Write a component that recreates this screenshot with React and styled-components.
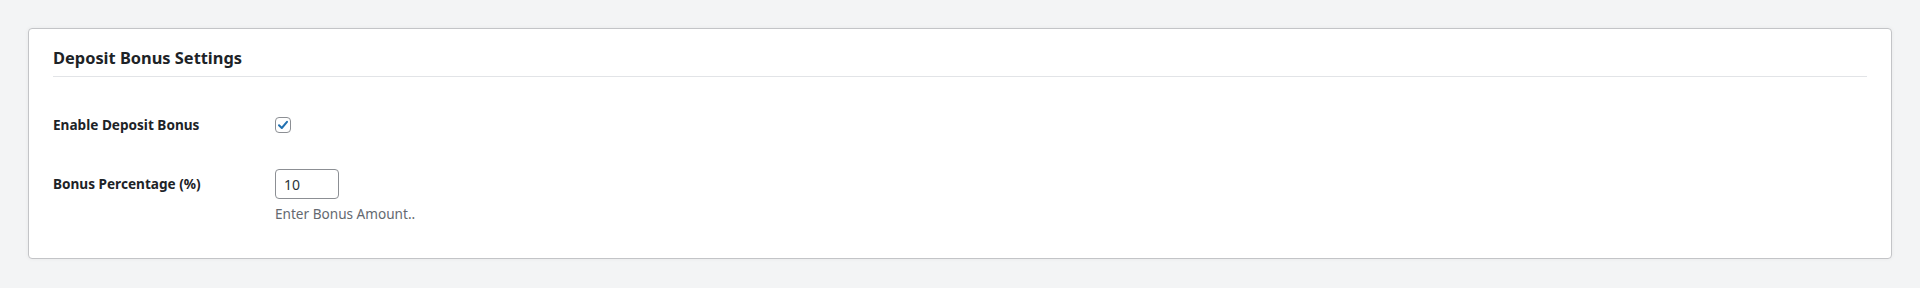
import styled, { createGlobalStyle } from "styled-components";

const GlobalStyle = createGlobalStyle`
  body {
    margin: 0;
    background: #f3f4f5;
    font-family: "Noto Sans", "Open Sans", sans-serif;
    color: #1d2327;
  }
`;

const Page = styled.div`
  padding: 28px;
`;

const Card = styled.section`
  background: #fff;
  border: 1px solid #c3c4c7;
  border-radius: 4px;
  box-shadow: 0 0 4px rgba(0, 0, 0, 0.05);
  padding: 0 24px 34px;
`;

const Header = styled.div`
  padding: 18px 0 7px;
  border-bottom: 1px solid #e2e4e7;
`;

const Title = styled.h2`
  margin: 0;
  font-size: 16.4px;
  line-height: 22px;
  font-weight: 700;
`;

const Body = styled.div`
  padding-top: 40px;
  display: flex;
  flex-direction: column;
  gap: 36px;
`;

const Row = styled.div`
  display: grid;
  grid-template-columns: 222px 1fr;
  align-items: ${(p) => (p.$center ? "center" : "start")};
`;

const Label = styled.label`
  font-size: 13.6px;
  font-weight: 700;
  line-height: ${(p) => (p.$tall ? "30px" : "16px")};
`;

const Field = styled.div`
  display: flex;
  flex-direction: column;
  align-items: flex-start;
`;

const CheckBox = styled.span`
  display: inline-flex;
  align-items: center;
  justify-content: center;
  width: 16px;
  height: 16px;
  box-sizing: border-box;
  border: 1px solid #8c8f94;
  border-radius: 4px;
  background: #fff;
`;

const NumberInput = styled.input`
  width: 64px;
  height: 30px;
  box-sizing: border-box;
  border: 1px solid #8c8f94;
  border-radius: 4px;
  padding: 0 8px;
  font-family: "Noto Sans", sans-serif;
  font-size: 14px;
  color: #2c3338;
  outline: none;
`;

const Description = styled.p`
  margin: 5px 0 0;
  font-size: 13.6px;
  line-height: 20px;
  color: #646970;
`;

export default function App() {
  return (
    <>
      <GlobalStyle />
      <Page>
        <Card>
          <Header>
            <Title>Deposit Bonus Settings</Title>
          </Header>
          <Body>
            <Row $center>
              <Label>Enable Deposit Bonus</Label>
              <Field>
                <CheckBox>
                  <svg width="12" height="12" viewBox="0 0 12 12">
                    <path
                      d="M2 6.2 L4.8 9 L10 2.8"
                      fill="none"
                      stroke="#2271b1"
                      strokeWidth="2"
                      strokeLinecap="round"
                      strokeLinejoin="round"
                    />
                  </svg>
                </CheckBox>
              </Field>
            </Row>
            <Row>
              <Label $tall>Bonus Percentage (%)</Label>
              <Field>
                <NumberInput type="text" defaultValue="10" />
                <Description>Enter Bonus Amount..</Description>
              </Field>
            </Row>
          </Body>
        </Card>
      </Page>
    </>
  );
}
